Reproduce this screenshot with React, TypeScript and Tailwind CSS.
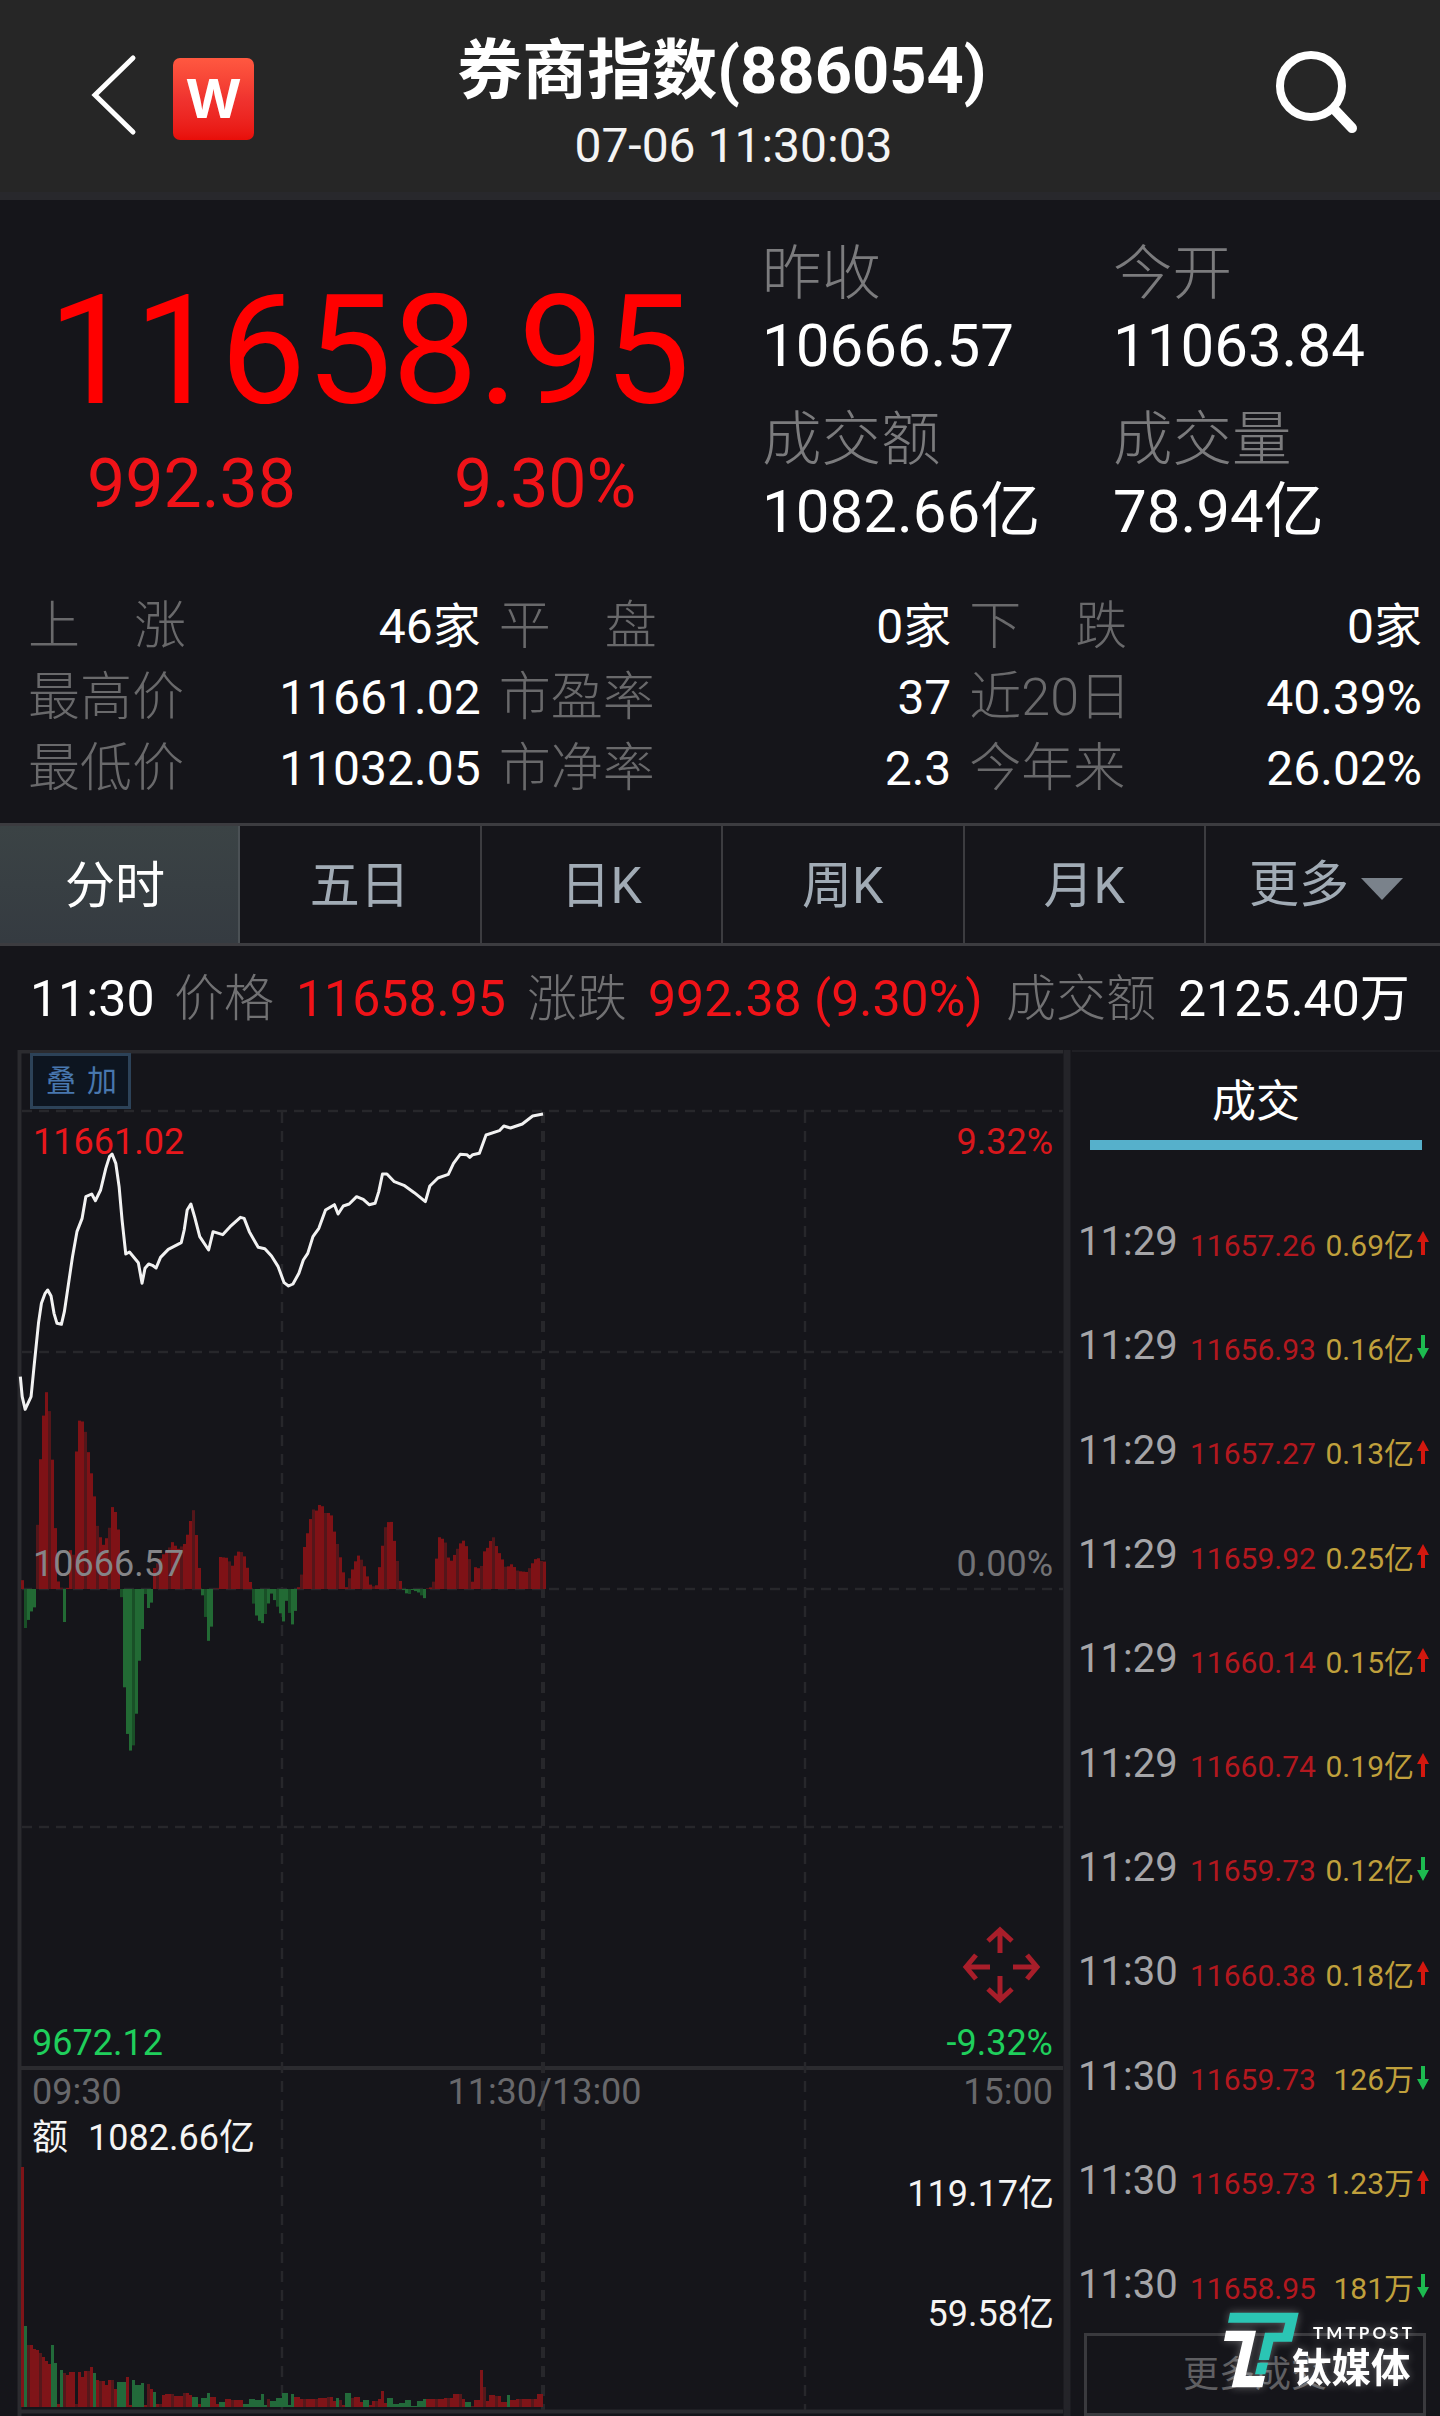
import React from "react";

interface Quote {
  label: string;
  value: string;
}

interface Tick {
  time: string;
  price: string;
  amount: string;
  up: boolean;
}

type Point = [number, number];

const quotes: Quote[] = [
  { label: "昨收", value: "10666.57" },
  { label: "今开", value: "11063.84" },
  { label: "成交额", value: "1082.66亿" },
  { label: "成交量", value: "78.94亿" },
];

const stats: { chars: string[]; value: string }[] = [
  { chars: ["上", "涨"], value: "46家" },
  { chars: ["平", "盘"], value: "0家" },
  { chars: ["下", "跌"], value: "0家" },
  { chars: ["最高价"], value: "11661.02" },
  { chars: ["市盈率"], value: "37" },
  { chars: ["近20日"], value: "40.39%" },
  { chars: ["最低价"], value: "11032.05" },
  { chars: ["市净率"], value: "2.3" },
  { chars: ["今年来"], value: "26.02%" },
];

const tabs = ["五日", "日K", "周K", "月K"];

const ticks: Tick[] = [
  { time: "11:29", price: "11657.26", amount: "0.69亿", up: true },
  { time: "11:29", price: "11656.93", amount: "0.16亿", up: false },
  { time: "11:29", price: "11657.27", amount: "0.13亿", up: true },
  { time: "11:29", price: "11659.92", amount: "0.25亿", up: true },
  { time: "11:29", price: "11660.14", amount: "0.15亿", up: true },
  { time: "11:29", price: "11660.74", amount: "0.19亿", up: true },
  { time: "11:29", price: "11659.73", amount: "0.12亿", up: false },
  { time: "11:30", price: "11660.38", amount: "0.18亿", up: true },
  { time: "11:30", price: "11659.73", amount: "126万", up: false },
  { time: "11:30", price: "11659.73", amount: "1.23万", up: true },
  { time: "11:30", price: "11658.95", amount: "181万", up: false },
];

// Series are kept on a 0-1568 time axis, the chart scales them down
const SX = 0.3699;

const priceLine: Point[] = [
  [55, 1010], [60, 1070], [68, 1108], [84, 1070], [92, 980], [104, 850], [112, 790], [122, 760], [129, 750], [138, 768],
  [146, 820], [154, 850], [166, 853], [174, 815], [184, 740], [196, 650], [208, 575], [222, 535], [232, 470], [248, 462],
  [258, 482], [272, 450], [286, 385], [296, 350], [303, 342], [313, 370], [322, 440], [330, 540], [340, 642], [350, 636],
  [374, 668], [384, 730], [392, 685], [402, 672], [412, 676], [422, 684], [434, 652], [455, 628], [490, 608], [498, 570],
  [506, 510], [516, 492], [526, 530], [540, 590], [564, 630], [576, 575], [602, 584], [622, 560], [650, 532], [660, 535],
  [674, 575], [698, 622], [716, 626], [734, 648], [752, 680], [768, 728], [780, 738], [792, 732], [808, 700], [820, 660],
  [832, 640], [846, 590], [862, 565], [880, 510], [904, 494], [914, 522], [928, 498], [944, 492], [964, 470], [982, 478],
  [998, 494], [1014, 490], [1024, 455], [1034, 402], [1046, 402], [1066, 425], [1092, 436], [1120, 458], [1150, 485],
  [1162, 438], [1184, 414], [1212, 403], [1226, 370], [1244, 343], [1262, 344], [1270, 352], [1278, 344], [1296, 340],
  [1314, 285], [1350, 272], [1362, 258], [1380, 264], [1412, 252], [1440, 228], [1468, 222],
];

const flow: Point[] = [
  [55, 13], [62, 8], [66, -40], [72, -38], [82, -24], [94, -18], [98, 0], [102, 76], [113, 155], [124, 199], [131, 190], [138, 160],
  [148, 82], [154, 20], [160, 2], [170, 1], [172, -33], [181, -33], [182, 1], [188, 3], [194, 86], [200, 20], [208, 158], [218, 173],
  [230, 160], [242, 130], [254, 98], [265, 58], [280, 44], [294, 56], [304, 82], [314, 76], [324, 50], [328, -3], [337, -103],
  [348, -163], [358, -160], [366, -150], [374, -83], [384, -47], [392, -2], [400, -20], [412, -12], [416, 20], [440, 34],
  [456, 40], [466, 47], [482, 40], [502, 46], [515, 68], [524, 80], [534, 44], [544, 1], [552, -16], [563, -53], [575, -32],
  [580, 1], [590, 1], [596, 32], [618, 31], [626, 20], [636, 33], [648, 39], [660, 34], [670, 20], [680, 2], [688, -23], [708, -36],
  [724, -18], [732, -3], [742, -11], [758, -24], [770, -36], [776, -4], [788, -40], [800, -20], [804, 1], [812, 3], [822, 40],
  [835, 62], [845, 80], [855, 78], [868, 87], [878, 76], [895, 76], [906, 54], [916, 40], [928, 18], [936, 1], [946, 12],
  [957, 24], [968, 34], [982, 27], [994, 12], [1004, 2], [1020, 4], [1030, 34], [1044, 66], [1058, 68], [1070, 40], [1082, 9],
  [1088, 1], [1094, -3], [1105, -6], [1115, -1], [1130, -3], [1150, -10], [1156, 1], [1170, 2], [1178, 24], [1187, 52], [1203, 49],
  [1216, 25], [1230, 35], [1243, 45], [1255, 49], [1268, 36], [1275, 2], [1284, 22], [1300, 20], [1310, 38], [1320, 42],
  [1332, 54], [1345, 40], [1358, 30], [1368, 21], [1384, 25], [1400, 18], [1425, 17], [1440, 26], [1452, 32], [1464, 28], [1478, 27],
];

// [time, height, 1 = rise / 0 = fall]
const turnover: [number, number, number][] = [
  [58, 240, 1], [66, 81, 0], [74, 62, 1], [82, 62, 1], [90, 58, 1], [98, 57, 1], [106, 54, 1], [114, 50, 1], [122, 46, 1], [130, 43, 1],
  [138, 62, 0], [147, 44, 0], [155, 3, 1], [164, 37, 0], [172, 34, 1], [180, 32, 1], [196, 35, 1], [204, 3, 1], [212, 35, 1],
  [224, 30, 1], [236, 36, 1], [246, 40, 1], [256, 34, 0], [266, 27, 1], [276, 26, 1], [286, 22, 1], [300, 27, 1], [312, 18, 1],
  [320, 25, 0], [336, 25, 0], [346, 30, 1], [354, 2, 1], [364, 27, 0], [374, 22, 0], [386, 24, 0], [392, 2, 1], [402, 23, 1], [411, 18, 1],
  [419, 15, 0], [428, 3, 1], [440, 12, 1], [460, 13, 1], [484, 11, 1], [504, 14, 1], [516, 12, 1], [530, 10, 0], [540, 3, 1],
  [552, 9, 0], [564, 14, 0], [578, 10, 1], [590, 3, 1], [600, 5, 0], [612, 8, 1], [630, 7, 1], [650, 7, 1], [668, 3, 0], [680, 8, 0],
  [696, 7, 0], [708, 13, 0], [718, 2, 0], [726, 8, 1], [738, 6, 0], [754, 9, 0], [770, 14, 0], [780, 2, 0], [790, 13, 0], [800, 10, 1],
  [820, 8, 1], [845, 8, 1], [870, 9, 1], [890, 10, 1], [904, 6, 1], [914, 9, 0], [924, 7, 1], [932, 2, 1], [941, 14, 0], [950, 9, 1],
  [966, 10, 1], [980, 5, 1], [990, 7, 0], [998, 2, 1], [1014, 6, 1], [1024, 8, 1], [1032, 16, 1], [1040, 4, 1], [1058, 9, 0], [1072, 3, 0],
  [1090, 4, 0], [1106, 7, 0], [1118, 1, 0], [1132, 6, 0], [1148, 8, 0], [1160, 8, 1], [1190, 8, 1], [1215, 9, 1], [1238, 13, 1],
  [1252, 8, 1], [1266, 5, 0], [1278, 1, 1], [1290, 7, 1], [1302, 37, 1], [1312, 20, 1], [1320, 6, 1], [1330, 12, 1], [1348, 11, 1],
  [1362, 5, 1], [1374, 12, 0], [1386, 7, 1], [1410, 8, 1], [1440, 8, 1], [1457, 13, 1],
];

const flowAt = (t: number) => {
  const next = flow.findIndex(([x]) => x >= t);
  if (next <= 0) return flow[0][1];
  const [x0, y0] = flow[next - 1];
  const [x1, y1] = flow[next];
  return y0 + ((y1 - y0) * (t - x0)) / (x1 - x0);
};

const flowBars = Array.from({ length: 175 }, (_, i) => ({ x: 21 + i * 3, h: flowAt((22.5 + i * 3) / SX) }));

const turnoverBars = Array.from({ length: 174 }, (_, i) => {
  const t = (22.5 + i * 3) / SX;
  const bar = turnover.reduce((a, b) => (Math.abs(b[0] - t) < Math.abs(a[0] - t) ? b : a));
  return { x: 21 + i * 3, h: bar[1], up: bar[2] === 1 };
});

const Header: React.FC = () => (
  <header className="flex h-[200px] items-start border-b-8 border-[#28282c] bg-[#262626]">
    <div className="flex w-[360px] items-start pl-[90px] pt-[54px]">
      <svg className="h-[84px] w-[48px]" viewBox="0 0 48 84" fill="none" stroke="#fff" strokeWidth="5" strokeLinecap="round">
        <path d="M43 4 5 41 43 78" />
      </svg>
      <div className="ml-[35px] mt-[4px] flex h-[82px] w-[81px] items-center justify-center rounded-[7px] bg-linear-to-b from-[#ff5840] via-[#f0332f] to-[#e80d08] font-['Inter',sans-serif] text-[54px] font-bold leading-none text-white">
        W
      </div>
    </div>
    <div className="flex flex-1 flex-col items-center whitespace-nowrap">
      <h1 className="mt-[36px] h-[70px] pl-1 text-[65px] font-bold leading-[70px] text-white">券商指数(886054)</h1>
      <div className="mt-[12px] pl-[27px] text-[48px] leading-[56px] text-[#f4f4f4]">07-06 11:30:03</div>
    </div>
    <div className="flex w-[360px] justify-end pr-[78px] pt-[47px]">
      <svg className="h-[94px] w-[90px]" viewBox="0 0 90 94" fill="none" stroke="#fff">
        <circle cx="39" cy="39" r="31" strokeWidth="8" />
        <path d="M62 62 80 81" strokeWidth="10" strokeLinecap="round" />
      </svg>
    </div>
  </header>
);

const Summary: React.FC = () => (
  <section className="flex h-[370px]">
    <div className="w-[762px] text-[#ff0000]">
      <div className="ml-[48px] mt-[71px] text-[153px] leading-[160px]">11658.95</div>
      <div className="mt-[13px] flex text-[68px] leading-[80px] text-[#f01318]">
        <span className="w-[368px] pl-[87px]">992.38</span>
        <span className="pl-[86px]">9.30%</span>
      </div>
    </div>
    <div className="grid flex-1 grid-cols-[351px_1fr] content-start pt-[39px]">
      {quotes.map((quote) => (
        <div key={quote.label} className="h-[166px]">
          <div className="text-[59.5px] font-light leading-[70px] text-[#7b7b7d]">{quote.label}</div>
          <div className="text-[60px] leading-[74px] text-white">{quote.value}</div>
        </div>
      ))}
    </div>
  </section>
);

const Stats: React.FC = () => (
  <section className="grid h-[253px] grid-cols-3 content-start gap-x-[18px] pl-[28px] pr-[18px] pt-[21px] leading-[71px]">
    {stats.map((stat) => (
      <div key={stat.chars.join("")} className="flex justify-between">
        <span className="flex w-[158px] justify-between whitespace-nowrap text-[52px] font-light text-[#69696b]">
          {stat.chars.map((char) => (
            <span key={char}>{char}</span>
          ))}
        </span>
        <span className="text-[48px] text-white">{stat.value}</span>
      </div>
    ))}
  </section>
);

const Tabs: React.FC = () => (
  <nav className="flex h-[123px] border-y-3 border-[#3c3c40] text-[50px] leading-[120px] text-[#a1abb5]">
    <div className="w-[240px] border-r-2 border-[#4b5155] bg-linear-to-b from-[#3b4345] to-[#353b41] pr-2 text-center text-white">分时</div>
    {tabs.map((tab) => (
      <div key={tab} className="w-[241.5px] border-r-2 border-[#3c3c40] text-center">
        {tab}
      </div>
    ))}
    <div className="flex flex-1 items-center pl-[43px]">
      更多
      <svg className="ml-[12px] mt-2 h-[22px] w-[42px]" viewBox="0 0 42 22">
        <path d="M0 0H42L21 22Z" fill="#7a828b" />
      </svg>
    </div>
  </nav>
);

const PriceBar: React.FC = () => (
  <div className="flex h-[104px] whitespace-pre pl-[30px] text-[50px] leading-[107px] text-white">
    <span className="w-[144px]">11:30</span>
    <span className="w-[122px] font-light text-[#717173]">价格</span>
    <span className="w-[231px] text-[#f01318]">11658.95</span>
    <span className="w-[121px] font-light text-[#717173]">涨跌</span>
    <span className="w-[358px] text-[#f01318]">992.38 (9.30%)</span>
    <span className="w-[172px] font-light text-[#717173]">成交额</span>
    <span>2125.40万</span>
  </div>
);

const Chart: React.FC = () => (
  <svg className="h-[1366px] w-[1072px] shrink-0" viewBox="0 1050 1072 1366">
    {/* Frame and grid */}
    <g fill="none" stroke="#27272b" strokeWidth="3">
      <path d="M18 1051.5H1063M19.5 1050V2416M19 2068H1063M19 2411.5H1063" stroke="#2b2b2f" strokeWidth="4" />
      <path d="M1067 1050V2416" stroke="#242429" strokeWidth="7" />
      <path d="M22 1111H1063M22 1352H1063M22 1589H1063M22 1827H1063" strokeDasharray="10 7" strokeWidth="2.5" />
      <path d="M282 1112V2410M805 1112V2410" strokeDasharray="11 8" strokeWidth="2.5" />
      <path d="M543 1112V2410" strokeDasharray="11 8" strokeWidth="4" />
    </g>

    {/* Capital flow */}
    {flowBars.map(({ x, h }, i) => (
      <rect
        key={x}
        x={x}
        y={h > 0 ? 1589 - h : 1589}
        width="3"
        height={Math.abs(h)}
        fill={h > 0 ? (i % 4 === 1 ? "#54161a" : "#7f1216") : i % 4 === 1 ? "#195027" : "#226a34"}
      />
    ))}

    <g fontSize="36">
      <text x="33" y="1154" fill="#e8171c">11661.02</text>
      <text x="1053" y="1154" textAnchor="end" fill="#d8171c">9.32%</text>
      <text x="33" y="1576" fill="#858588">10666.57</text>
      <text x="1053" y="1576" textAnchor="end" fill="#727275">0.00%</text>
      <text x="32" y="2055" fill="#1fcf5c">9672.12</text>
      <text x="1053" y="2055" textAnchor="end" fill="#1fcf5c">-9.32%</text>
      <g fill="#68686b">
        <text x="32" y="2104">09:30</text>
        <text x="544.5" y="2104" textAnchor="middle">11:30/13:00</text>
        <text x="1053" y="2104" textAnchor="end">15:00</text>
      </g>
      <g fill="#f4f4f4">
        <text x="32" y="2150">额</text>
        <text x="88" y="2150">1082.66亿</text>
        <text x="1054" y="2206" textAnchor="end">119.17亿</text>
        <text x="1054" y="2326" textAnchor="end">59.58亿</text>
      </g>
    </g>

    <polyline
      points={priceLine.map(([x, y]) => `${x * SX},${1040 + y / 3}`).join(" ")}
      fill="none"
      stroke="#f2f2f2"
      strokeWidth="3"
      strokeLinejoin="round"
    />

    {/* Overlay button */}
    <rect x="31.5" y="1054.5" width="98" height="53" fill="#0d1520" stroke="#2c4258" strokeWidth="3" />
    <g fill="#4877ae" fontSize="30">
      <text x="46" y="1091">叠</text>
      <text x="87" y="1091">加</text>
    </g>

    {/* Expand arrows */}
    <g stroke="#a81e2a" strokeWidth="5" fill="none">
      <path d="M1000 1953V1931M988 1941 1000 1930 1012 1941" />
      <path d="M1000 1976V2000M988 1989 1000 2000 1012 1989" />
      <path d="M990 1967H967M976 1955 966 1967 976 1979" />
      <path d="M1013 1967H1036M1027 1955 1037 1967 1027 1979" />
    </g>

    {/* Turnover */}
    {turnoverBars.map(({ x, h, up }, i) => (
      <rect
        key={x}
        x={x}
        y={2407 - h}
        width="3"
        height={h}
        fill={up ? (i % 4 === 2 ? "#55181b" : "#7f1418") : "#226a3a"}
      />
    ))}
  </svg>
);

const Arrow: React.FC<{ up: boolean }> = ({ up }) => (
  <svg className="ml-[3px] mt-[-2px] h-[24px] w-[12px]" viewBox="0 0 12 24">
    {up ? (
      <path d="M6 0 12 11H8V24H4V11H0Z" fill="#d3180f" />
    ) : (
      <path d="M6 24 12 13H8V0H4V13H0Z" fill="#1dbb50" />
    )}
  </svg>
);

const Trades: React.FC = () => (
  <aside className="flex-1 border-t-2 border-[#1f1f24]">
    <div className="ml-[18px] mr-[18px] h-[98px] border-b-10 border-[#56b0cb] pt-[25px] text-center text-[44px] leading-[50px] text-white">
      成交
    </div>
    <div className="pt-[40px]">
      {ticks.map((tick, i) => (
        <div key={i} className="flex h-[104.3px] items-center whitespace-nowrap pl-[6px]">
          <span className="w-[112px] text-[40px] text-[#a5a5a8]">{tick.time}</span>
          <span className="mt-1.5 text-[30px] text-[#b3181f]">{tick.price}</span>
          <span className="ml-auto mt-1.5 text-[30px] text-[#c0a03c]">{tick.amount}</span>
          <span className="mr-[11px] mt-1">
            <Arrow up={tick.up} />
          </span>
        </div>
      ))}
    </div>
    <div className="ml-[12px] mr-[14px] mt-[-4px] h-[83px] border-3 border-[#3a3a3e] text-center text-[36px] leading-[78px] text-[#5f5f62]">
      更多成交
    </div>
  </aside>
);

const Watermark: React.FC = () => (
  <div className="absolute left-[1222px] top-[2308px] flex drop-shadow-[0_0_4px_rgba(255,255,255,0.35)]">
    <svg className="h-[82px] w-[78px]" viewBox="66 54 234 246">
      <path d="M90 68H296L276 155H220L207 210H176L195 128H248L256 98H84ZM173 218H204L196 253H165Z" fill="#2bc5b4" />
      <path d="M78 122H168L137 258H195L187 292H95L128 153H72Z" fill="#fff" />
    </svg>
    <div className="ml-[-8px] whitespace-nowrap text-white">
      <div className="ml-[21px] mt-[16px] font-['Lato',sans-serif] text-[17px] font-bold leading-[18px] tracking-[3.1px]">TMTPOST</div>
      <div className="mt-[5px] text-[39.5px] font-bold leading-[44px]">钛媒体</div>
    </div>
  </div>
);

const App: React.FC = () => {
  return (
    <div className="relative h-[2416px] w-[1440px] overflow-hidden bg-[#15151a] font-['Roboto','Noto_Sans_CJK_SC',sans-serif]">
      <Header />
      <Summary />
      <Stats />
      <Tabs />
      <PriceBar />
      <div className="flex">
        <Chart />
        <Trades />
      </div>
      <Watermark />
    </div>
  );
};

export default App;
